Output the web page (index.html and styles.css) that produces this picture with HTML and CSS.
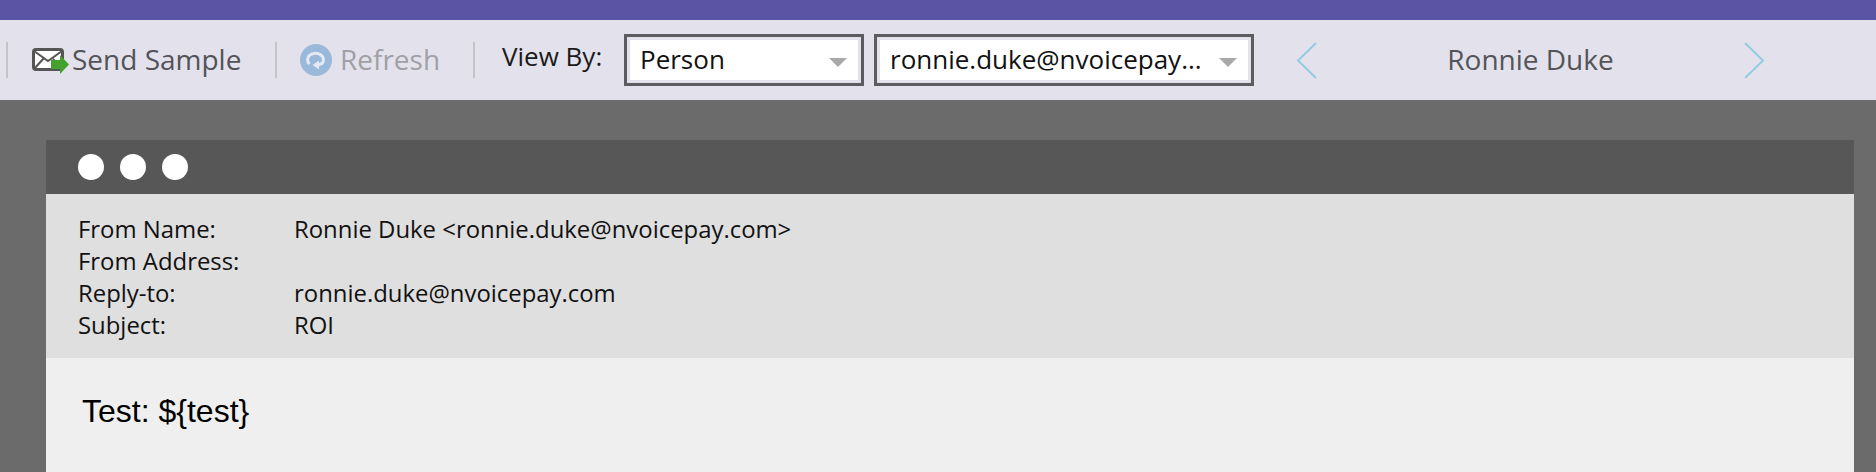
FILE: index.html

```html
<!DOCTYPE html>
<html lang="en">
<head>
    <meta charset="UTF-8">
    <title>Email Preview</title>
    <link rel="stylesheet" href="styles.css">
</head>
<body>
    <div class="topbar"></div>
    <div class="toolbar">
        <span class="sep sep-first"></span>
        <div class="tool tool-send">
            <svg class="icon-mail" width="38" height="26" viewBox="0 0 38 26">
                <rect x="1.5" y="1.5" width="29" height="20" rx="2.5" fill="#fff" stroke="#555" stroke-width="3"/>
                <path d="M2 3 L16 13 L30 3 M2 21 L12 10 M30 21 L21 11" fill="none" stroke="#555" stroke-width="2"/>
                <path d="M19 12 H28 V7 L37 16.5 L28 26 V21 H19 Z" fill="#43a12d"/>
            </svg>
            <span class="tool-text">Send Sample</span>
        </div>
        <span class="sep"></span>
        <div class="tool tool-refresh">
            <svg class="icon-refresh" width="32" height="32" viewBox="0 0 32 32">
                <circle cx="16" cy="16" r="16" fill="#9ab8da"/>
                <path d="M9.5 20 A8 6.5 0 1 1 22 19.5 L18 21" fill="none" stroke="#e4e9f3" stroke-width="3"/>
                <path d="M19 16.5 V25.5 L12.5 21 Z" fill="#e4e9f3"/>
            </svg>
            <span class="tool-text">Refresh</span>
        </div>
        <span class="sep"></span>
        <span class="view-label">View By:</span>
        <div class="select select-type">
            <div class="select-inner">
                <span class="select-text">Person</span>
                <span class="caret"></span>
            </div>
        </div>
        <div class="select select-person">
            <div class="select-inner">
                <span class="select-text">ronnie.duke@nvoicepay...</span>
                <span class="caret"></span>
            </div>
        </div>
        <div class="pager">
            <svg width="21" height="37" viewBox="0 0 21 37"><path d="M20 1 L2 18.5 L20 36" fill="none" stroke="#93cbe4" stroke-width="2"/></svg>
            <span class="pager-name">Ronnie Duke</span>
            <svg width="21" height="37" viewBox="0 0 21 37"><path d="M1 1 L19 18.5 L1 36" fill="none" stroke="#93cbe4" stroke-width="2"/></svg>
        </div>
    </div>
    <div class="stage">
        <div class="window">
            <div class="titlebar">
                <span class="dot"></span>
                <span class="dot"></span>
                <span class="dot"></span>
            </div>
            <div class="meta">
                <div class="meta-row"><span class="meta-key">From Name:</span><span>Ronnie Duke &lt;ronnie.duke@nvoicepay.com&gt;</span></div>
                <div class="meta-row"><span class="meta-key">From Address:</span><span></span></div>
                <div class="meta-row"><span class="meta-key">Reply-to:</span><span>ronnie.duke@nvoicepay.com</span></div>
                <div class="meta-row"><span class="meta-key">Subject:</span><span>ROI</span></div>
            </div>
            <div class="mail-body">Test: ${test}</div>
        </div>
    </div>
</body>
</html>
```

FILE: styles.css

```css
html, body {
    margin: 0;
    padding: 0;
    height: 472px;
    overflow: hidden;
}
body {
    font-family: "Open Sans", sans-serif;
    background-color: #6b6b6b;
}
.topbar {
    height: 20px;
    background: #5b53a3;
}
.toolbar {
    height: 80px;
    background: #e3e2ec;
    display: flex;
    align-items: center;
}
.sep {
    width: 2px;
    height: 36px;
    background: #c4c4c8;
}
.sep-first {
    margin-left: 6px;
}
.tool {
    display: flex;
    align-items: center;
    font-size: 28px;
}
.tool-text {
    margin-bottom: 2px;
}
.tool-send {
    width: 267px;
    color: #535358;
}
.icon-mail {
    margin-left: 24px;
    margin-top: 2px;
    margin-right: 2px;
}
.tool-refresh {
    width: 196px;
    color: #a0a0a6;
}
.icon-refresh {
    margin-left: 23px;
    margin-right: 8px;
}
.view-label {
    margin-left: 27px;
    width: 122px;
    margin-top: -8px;
    font-size: 26px;
    color: #1a1a1a;
}
.select {
    box-sizing: border-box;
    height: 52px;
    border: 3px solid #5c5c60;
    padding: 3px;
    display: flex;
}
.select-inner {
    flex: 1;
    min-width: 0;
    display: flex;
    justify-content: space-between;
    background: #fff;
}
.select-text {
    font-size: 26px;
    line-height: 38px;
    color: #111;
    padding-left: 10px;
    white-space: nowrap;
}
.caret {
    width: 0;
    height: 0;
    margin-top: 18px;
    margin-right: 11px;
    border-left: 9px solid transparent;
    border-right: 9px solid transparent;
    border-top: 9px solid #a9a9a9;
}
.select-type {
    width: 240px;
    margin-right: 10px;
}
.select-person {
    width: 380px;
}
.pager {
    display: flex;
    align-items: center;
    margin-left: 42px;
}
.pager-name {
    width: 427px;
    margin-bottom: 2px;
    text-align: center;
    font-size: 28px;
    color: #555559;
}
.stage {
    padding: 40px 22px 0 46px;
}
.window {
    background: #efefef;
    height: 332px;
}
.titlebar {
    height: 54px;
    background: #575757;
    display: flex;
    align-items: center;
    gap: 16px;
    padding-left: 32px;
}
.dot {
    width: 26px;
    height: 26px;
    border-radius: 50%;
    background: #fff;
}
.meta {
    height: 164px;
    box-sizing: border-box;
    padding: 19px 32px 0;
    background: #dfdfdf;
    font-size: 23.9px;
    line-height: 32px;
    color: #111;
}
.meta-row {
    display: flex;
    height: 32px;
}
.meta-key {
    width: 216px;
}
.mail-body {
    padding: 35px 36px 0;
    font-family: "Liberation Sans", sans-serif;
    font-size: 32px;
    color: #000;
}
```
